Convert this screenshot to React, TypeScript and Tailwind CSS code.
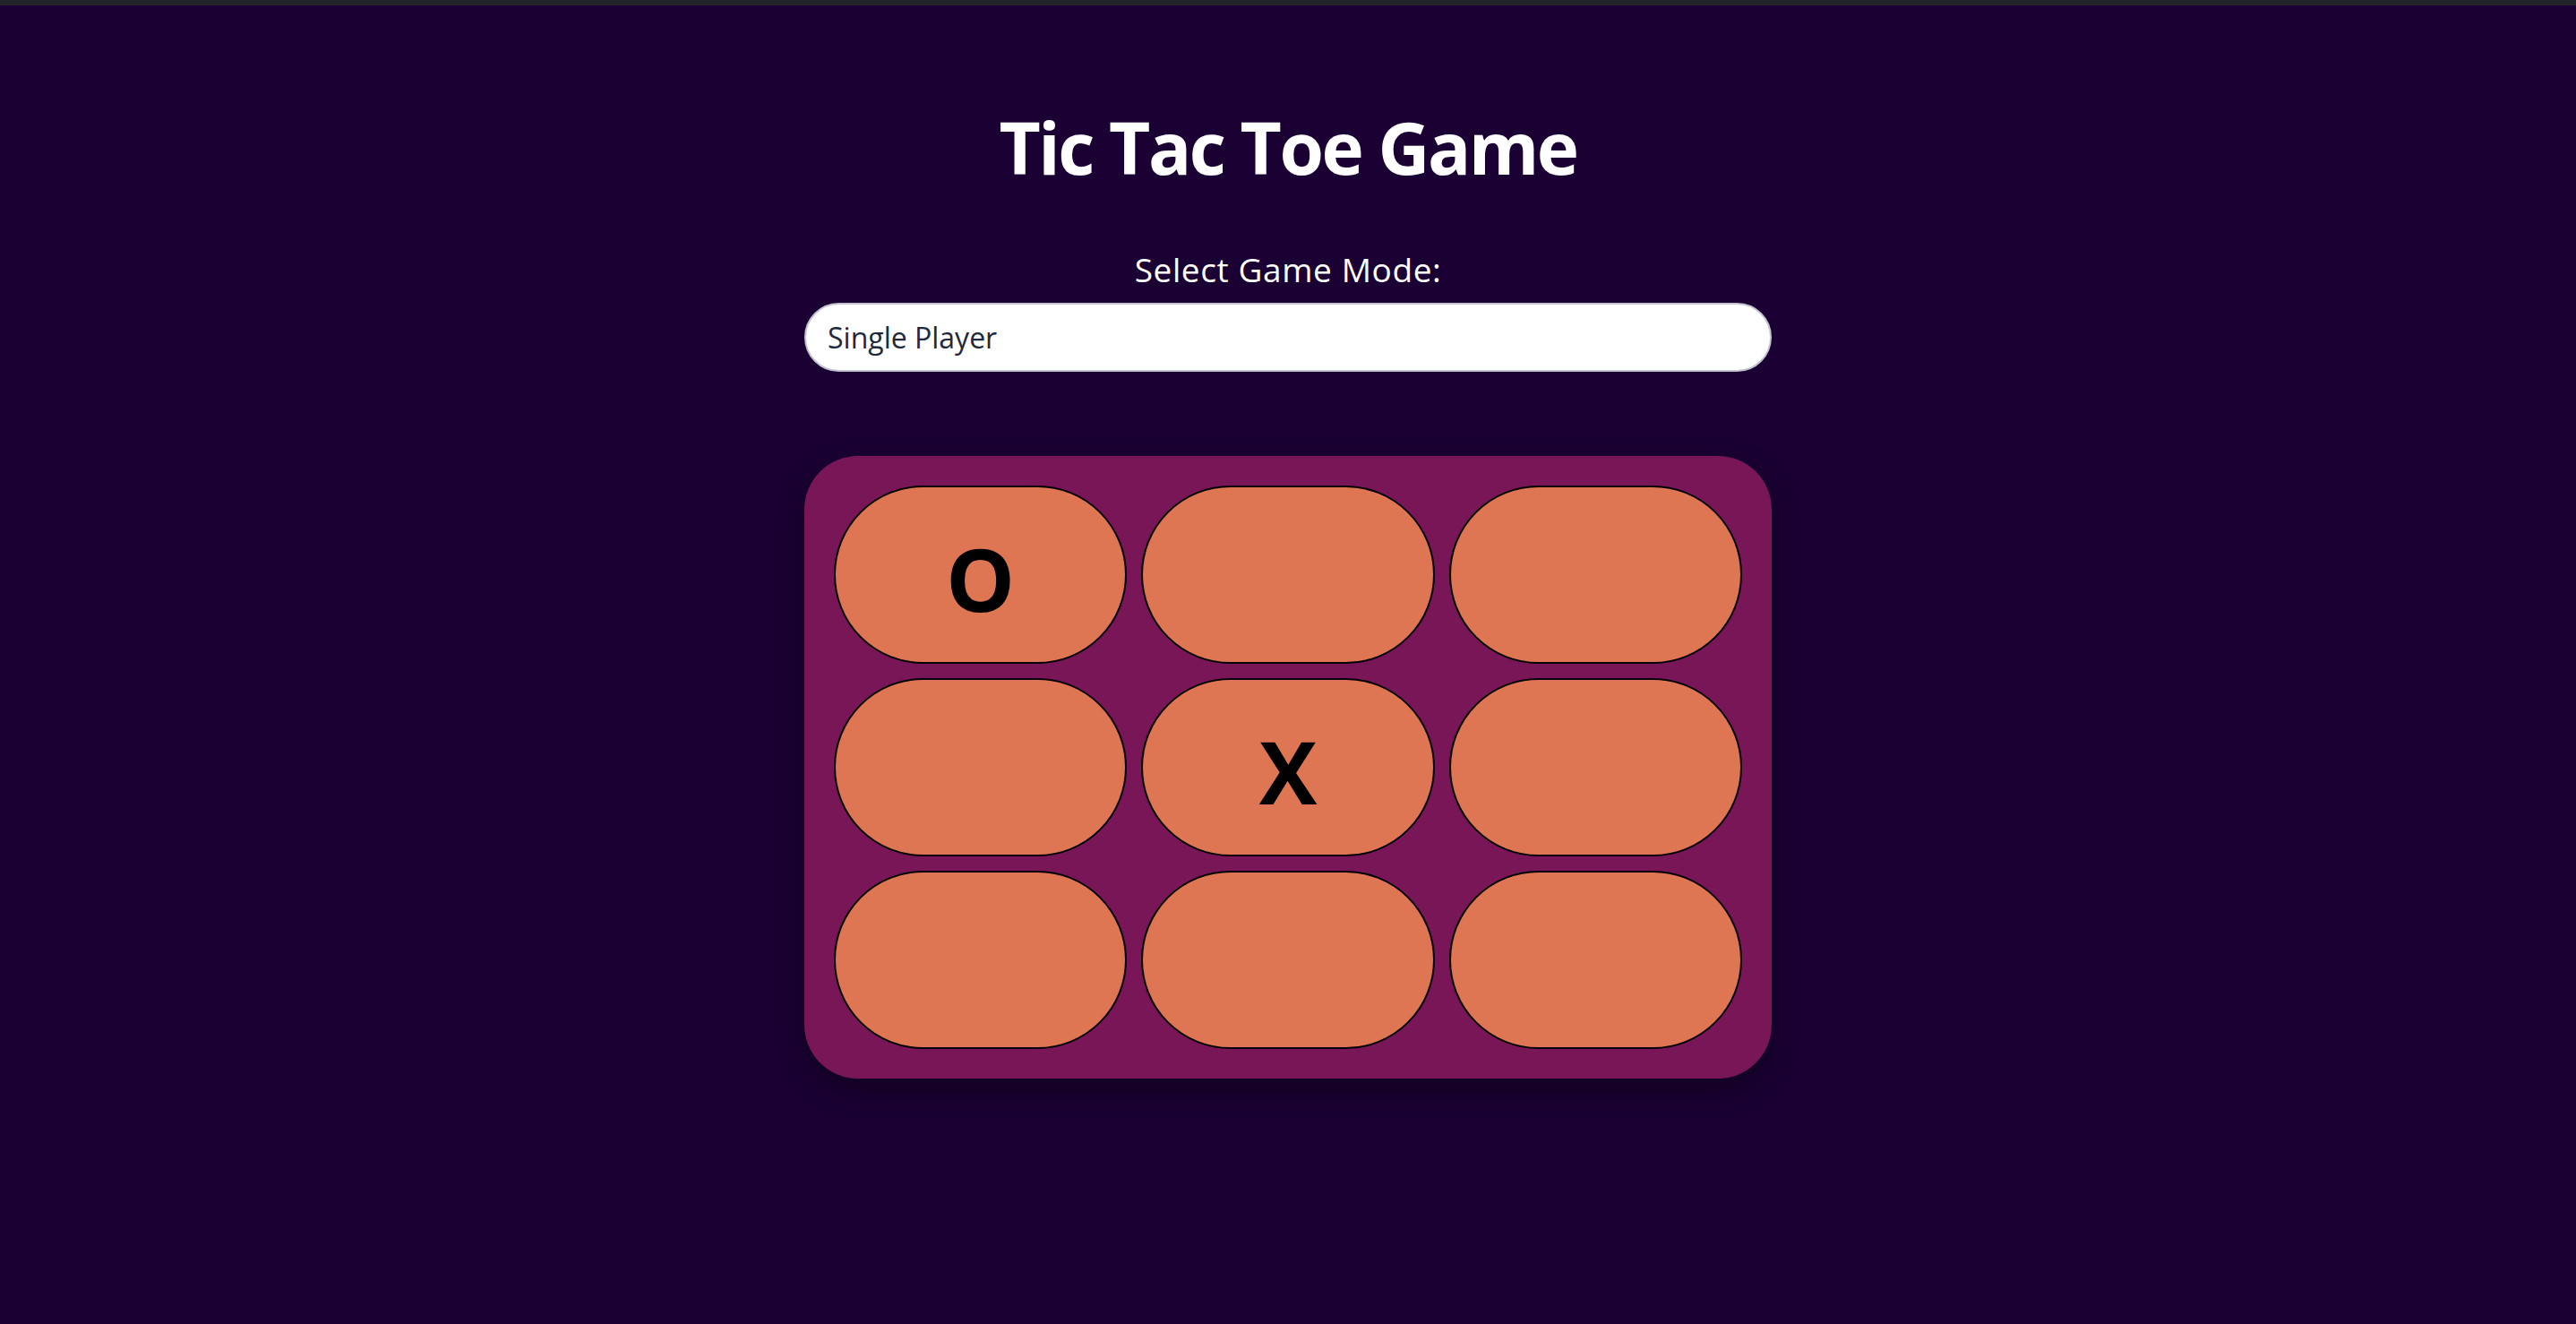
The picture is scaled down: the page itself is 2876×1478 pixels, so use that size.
import React from 'react';

type Mark = 'X' | 'O' | null;

const initialBoard: Mark[] = ['O', null, null, null, 'X', null, null, null, null];

export default function App() {
  const [board, setBoard] = React.useState<Mark[]>(initialBoard);
  const [mode, setMode] = React.useState('single');

  const play = (index: number) => {
    if (board[index]) return;
    const next = [...board];
    const filled = next.filter(Boolean).length;
    next[index] = filled % 2 === 0 ? 'O' : 'X';
    setBoard(next);
  };

  return (
    <div
      className="min-h-screen bg-[#1a0033] border-t-[6px] border-[#22262a] flex flex-col items-center"
      style={{ fontFamily: '"Open Sans", "Noto Sans", sans-serif' }}
    >
      <h1 className="mt-[118px] text-[80px] leading-none font-bold text-white tracking-[-2.5px]">
        Tic Tac Toe Game
      </h1>

      <label htmlFor="mode" className="mt-[78px] text-[37px] leading-none text-white tracking-[0.6px]">
        Select Game Mode:
      </label>
      <select
        id="mode"
        value={mode}
        onChange={(e) => setMode(e.target.value)}
        className="mt-[19px] w-[1080px] h-[77px] appearance-none rounded-full bg-white border-2 border-[#c4c4d0] px-[24px] text-[32px] text-[#1e293b] outline-none"
      >
        <option value="single">Single Player</option>
        <option value="multi">Two Players</option>
      </select>

      <div className="mt-[94px] w-[1080px] rounded-[60px] bg-[#781657] p-[33px] grid grid-cols-3 gap-4 shadow-[0_12px_30px_rgba(0,0,0,0.35)]">
        {board.map((cell, i) => (
          <button
            key={i}
            type="button"
            onClick={() => play(i)}
            className="h-[199px] rounded-full bg-[#de7654] border-2 border-black flex items-center justify-center pt-2 text-[97px] leading-none font-bold text-black"
          >
            {cell}
          </button>
        ))}
      </div>
    </div>
  );
}
